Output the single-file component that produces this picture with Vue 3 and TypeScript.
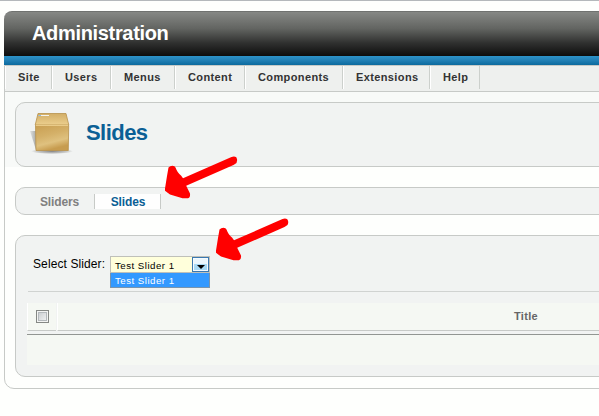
<script setup lang="ts">
interface MenuItem {
  label: string
  width: number
}

const menu: MenuItem[] = [
  { label: 'Site', width: 47 },
  { label: 'Users', width: 59 },
  { label: 'Menus', width: 64 },
  { label: 'Content', width: 70 },
  { label: 'Components', width: 98 },
  { label: 'Extensions', width: 87 },
  { label: 'Help', width: 50 },
]
const arrows = ['translate(0 0)', 'translate(51 62)']
</script>

<template>
  <div class="page">
    <header class="header"><h1>Administration</h1></header>
    <div class="stripe"></div>
    <main class="frame">
      <nav class="menu">
        <a v-for="item in menu" :key="item.label" :style="{ width: item.width + 'px' }">{{ item.label }}</a>
      </nav>
      <div class="title-wrap">
        <section class="panel title-panel">
          <svg class="box-icon" width="50" height="50" viewBox="0 0 50 50">
            <defs>
              <linearGradient id="front" x1="0" y1="0" x2="0.35" y2="1">
                <stop offset="0" stop-color="#c99f52" />
                <stop offset="0.45" stop-color="#d4b068" />
                <stop offset="0.75" stop-color="#dfc17f" />
                <stop offset="1" stop-color="#c79c4f" />
              </linearGradient>
              <linearGradient id="lid" x1="0" y1="0" x2="0" y2="1">
                <stop offset="0" stop-color="#d2ae67" />
                <stop offset="1" stop-color="#eccf8e" />
              </linearGradient>
              <linearGradient id="side" x1="1" y1="0" x2="0" y2="0">
                <stop offset="0" stop-color="#a9abaa" />
                <stop offset="1" stop-color="#dfe1e0" />
              </linearGradient>
              <radialGradient id="ground">
                <stop offset="0" stop-color="#888" />
                <stop offset="0.7" stop-color="#c8c9c8" />
                <stop offset="1" stop-color="#f1f3f2" />
              </radialGradient>
            </defs>
            <ellipse cx="27" cy="46.3" rx="21" ry="2.8" fill="url(#ground)" />
            <path d="M5 26H11V45Z" fill="url(#side)" />
            <path d="M13 8.5H41L43.8 20H10.2Z" fill="url(#lid)" stroke="#b8924d" stroke-width="0.8" />
            <path d="M10.5 20.5H43.7L43.3 45.5H11Z" fill="url(#front)" stroke="#b8924d" stroke-width="0.8" />
            <path d="M11 20.5H43" stroke="#e9cb89" />
            <path d="M14 10.5H24" stroke="#f4f3ee" />
            <path d="M13.5 10.5H16" stroke="#8cbce9" />
          </svg>
          <h2>Slides</h2>
        </section>
      </div>
      <section class="panel tabs">
        <a class="tab">Sliders</a>
        <a class="tab active">Slides</a>
      </section>
      <section class="panel content">
        <div class="filter">
          <label>Select Slider:</label>
          <div class="select">
            <div class="value">
              <span>Test Slider 1</span>
              <i class="button"><svg width="8" height="4" viewBox="0 0 8 4"><path d="M0 0H8L4 4Z" fill="#000" /></svg></i>
            </div>
            <div class="option">Test Slider 1</div>
          </div>
        </div>
        <div class="table">
          <div class="row">
            <div class="cell check"><span class="checkbox"></span></div>
            <div class="cell title">Title</div>
          </div>
          <div class="empty"></div>
        </div>
      </section>
    </main>
    <svg class="arrows" width="599" height="416" viewBox="0 0 599 416">
      <path
        v-for="a in arrows"
        :key="a"
        :transform="a"
        d="M168.5 167.5Q170 165.8 172.5 165.8Q174.8 165.8 175.5 167.5Q177.5 173 181 175.5L183 178.3L231.5 157Q234.5 155.8 236.5 157.5Q238 160.3 236.5 163L233.5 164.9L186.2 185.8L190 193.5Q190.5 197.5 188 198.2H182.5L170 194.6L165 190.8V188.5L167 176Z"
        fill="#f00"
      />
    </svg>
  </div>
</template>

<style>
body {
  background: #fefffd;
}
</style>

<style scoped>
* {
  box-sizing: border-box;
}
.page {
  position: relative;
  width: 599px;
  height: 416px;
  overflow: hidden;
  padding: 10px 0 0 4px;
  border-top: 1px solid #b4b8bb;
  background: #fefffd;
  font-family: 'Liberation Sans', Arial, sans-serif;
}
.header {
  height: 45px;
  padding-left: 28px;
  border-top: 1px solid #707270;
  border-radius: 8px 0 0 0;
  background: linear-gradient(#868885, #626461 38%, #303130 70%, #0d0d0d);
}
h1 {
  margin: 0;
  color: #fff;
  font-size: 20px;
  letter-spacing: -0.33px;
  line-height: 43px;
}
.stripe {
  height: 9px;
  background: linear-gradient(#2d93c9, #217fb4 50%, #0c6a9e);
}
.frame {
  width: 620px;
  height: 324px;
  border: 1px solid #c7cac7;
  border-radius: 0 0 0 10px;
}
.menu {
  display: flex;
  height: 26px;
  padding-bottom: 2px;
  border-bottom: 1px solid #c7cac7;
  background: #eef0ee;
}
.menu a {
  flex: none;
  border-left: 1px solid #fff;
  border-right: 1px solid #ccd0cc;
  padding-left: 12px;
  color: #333;
  font-size: 11px;
  font-weight: bold;
  letter-spacing: 0.38px;
  line-height: 23px;
}
.title-wrap {
  padding: 10px 0 0 10px;
  background: #f8faf8;
}
.panel {
  border: 1px solid #c7cac7;
  border-radius: 10px;
  background: #f1f3f2;
}
.title-panel {
  display: flex;
  height: 65px;
}
.box-icon {
  margin: 2px 0 0 9px;
}
h2 {
  margin: 0 0 0 11px;
  color: #0b5f95;
  font-size: 22px;
  letter-spacing: -0.55px;
  line-height: 59px;
}
.tabs {
  display: flex;
  height: 28px;
  margin: 20px 0 0 10px;
  padding: 6px 0 0 8px;
}
.tab {
  height: 15px;
  width: 70px;
  padding-left: 1px;
  text-align: center;
  color: #808080;
  font-size: 12px;
  font-weight: bold;
  letter-spacing: -0.15px;
  line-height: 16px;
}
.tab.active {
  width: 67px;
  border-left: 1px solid #c7cac7;
  border-right: 1px solid #c7cac7;
  background: #fefefe;
  color: #0b5f95;
}
.content {
  height: 142px;
  margin: 20px 0 0 10px;
  padding: 20px 0 0 11px;
}
.filter {
  display: flex;
  height: 36px;
  margin-left: 1px;
  padding-left: 5px;
  border-bottom: 1px solid #d0d3d1;
  font-size: 12px;
}
label {
  width: 77px;
  line-height: 16px;
  letter-spacing: 0.1px;
  color: #000;
}
.select {
  width: 100px;
  font-size: 9.7px;
  letter-spacing: 0.48px;
}
.value {
  display: flex;
  justify-content: space-between;
  height: 17px;
  padding-left: 4px;
  border: 1px solid #bfc0b9;
  background: #ffffdb;
  line-height: 17px;
}
.button {
  width: 17px;
  height: 15px;
  border: 1px solid #3b78b0;
  background: linear-gradient(#eaf6fd 45%, #a8daf5 50%);
  box-shadow: inset 0 0 0 1px #f5fbfe;
  display: flex;
  justify-content: center;
  padding-top: 7px;
}
.option {
  height: 15px;
  padding-left: 4px;
  border: 1px solid #7894ae;
  border-top: 0;
  background: #3399ff;
  color: #fff;
  line-height: 15px;
}
.table {
  margin-top: 11px;
}
.row {
  display: flex;
  height: 31px;
  padding-bottom: 3px;
}
.cell {
  height: 28px;
  border-left: 1px solid #fff;
  border-bottom: 1px solid #c7cac7;
  background: #f5f8f3;
}
.check {
  width: 29px;
  margin-right: 1px;
  padding: 7px 0 0 8px;
}
.checkbox {
  display: block;
  width: 13px;
  height: 13px;
  border: 1px solid #858885;
  background: linear-gradient(135deg, #c3c7ca, #f7f8f8);
  box-shadow: inset 0 0 0 1px #f3f4f3, inset 0 0 0 2px #b4b9bc;
}
.title {
  flex: 1;
  padding-left: 456px;
  color: #666;
  font-size: 11px;
  font-weight: bold;
  letter-spacing: 0.3px;
  line-height: 27px;
}
.empty {
  height: 31px;
  border-top: 1px solid #929692;
  background: #f5f8f3;
}
.arrows {
  position: absolute;
  left: 0;
  top: -1px;
}
</style>
